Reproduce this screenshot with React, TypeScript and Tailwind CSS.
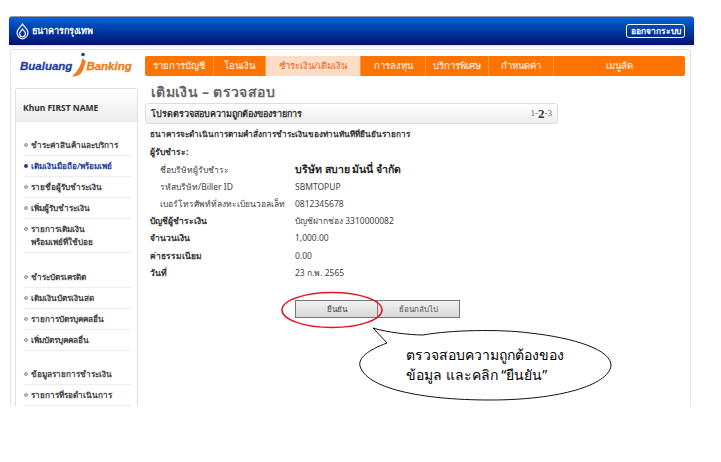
const font = { thai: "font-['Noto_Sans','Noto_Sans_CJK_SC','DejaVu_Sans',sans-serif]" };

const tabs = [
  { label: "รายการบัญชี", w: "w-[69px]" },
  { label: "โอนเงิน", w: "w-[52px]" },
  { label: "ชำระเงิน/เติมเงิน", w: "w-[95px]", active: true },
  { label: "การลงทุน", w: "w-[65px]" },
  { label: "บริการพิเศษ", w: "w-[63px]" },
  { label: "กำหนดค่า", w: "w-[65px]" },
  { label: "เมนูลัด", w: "flex-1" },
];

const menuGroups = [
  {
    gap: "mb-[14px]",
    items: [
      { label: "ชำระค่าสินค้าและบริการ" },
      { label: "เติมเงินมือถือ/พร้อมเพย์", active: true },
      { label: "รายชื่อผู้รับชำระเงิน" },
      { label: "เพิ่มผู้รับชำระเงิน" },
      { label: "รายการเติมเงิน", second: "พร้อมเพย์ที่ใช้บ่อย" },
    ],
  },
  {
    gap: "mb-[13px]",
    items: [
      { label: "ชำระบัตรเครดิต" },
      { label: "เติมเงินบัตรเงินสด" },
      { label: "รายการบัตรบุคคลอื่น" },
      { label: "เพิ่มบัตรบุคคลอื่น" },
    ],
  },
  {
    gap: "",
    items: [{ label: "ข้อมูลรายการชำระเงิน" }, { label: "รายการที่รอดำเนินการ" }],
  },
];

const rows = [
  { label: "ชื่อบริษัทผู้รับชำระ", value: "บริษัท สบาย มันนี่ จำกัด", sub: true, strong: true },
  { label: "รหัสบริษัท/Biller ID", value: "SBMTOPUP", sub: true },
  { label: "เบอร์โทรศัพท์ที่ลงทะเบียนวอลเล็ท", value: "0812345678", sub: true },
  { label: "บัญชีผู้ชำระเงิน", value: "บัญชีฝากช่อง 3310000082" },
  { label: "จำนวนเงิน", value: "1,000.00" },
  { label: "ค่าธรรมเนียม", value: "0.00" },
  { label: "วันที่", value: "23 ก.พ. 2565" },
];

function Logo() {
  return (
    <div className="w-[116px] h-[26px] -mt-[4px] flex items-center italic font-black text-[#1f3f9c] text-[11.5px] font-['Liberation_Sans',sans-serif] shrink-0">
      <span className="mt-[3px] [-webkit-text-stroke:0.3px_#1f3f9c]">Bualuang</span>
      <svg width="16" height="26" viewBox="0 0 16 26" className="shrink-0 -ml-[1px]">
        <circle cx="12" cy="2.5" r="1.8" fill="#1f3f9c" />
        <path d="M11 6 Q11 15 1 24.5 Q9 25 12 18 Q14 12 15 9 Q13 8 11 6 Z" fill="#f47a1f" />
      </svg>
      <span className="mt-[3px] text-[#ef7b16] [-webkit-text-stroke:0.3px_#ef7b16] -ml-[1px]">Banking</span>
    </div>
  );
}

export default function App() {
  return (
    <div className={`w-[721px] h-[462px] bg-white overflow-hidden relative ${font.thai}`}>
      <div className="pt-4 pl-[9px] w-[694px]">
        <header className="h-[29px] rounded-t-[3px] bg-gradient-to-b from-[#0a62d8] to-[#00106f] border-t border-[#999] flex items-center justify-between pl-[7px] pr-[9px] shadow-sm">
          <div className="flex items-center gap-[3px] text-white text-[9px] font-bold">
            <svg width="13" height="17" viewBox="0 0 13 17" fill="none" stroke="#fff" strokeWidth="1.2">
              <path d="M6.5 1 C8 4 12 6 12 9.5 C12 13 9 15.5 6.5 16 C4 15.5 1 13 1 9.5 C1 6 5 4 6.5 1 Z" />
              <path d="M6.5 6 C7.5 8 9.5 9 9.5 10.5 C9.5 12 8 13.5 6.5 14 C5 13.5 3.5 12 3.5 10.5 C3.5 9 5.5 8 6.5 6 Z" />
            </svg>
            <span>ธนาคารกรุงเทพ</span>
          </div>
          <div className="h-[14px] w-[59px] border border-white rounded-[3px] text-white text-[8.5px] font-bold flex items-center justify-center leading-none">
            ออกจากระบบ
          </div>
        </header>

        <div className="mt-[4px] ml-[1px] w-[681px] border-l border-t border-r border-[#e4e4e4] rounded-t-[3px] pl-[4px] pr-[5px] pt-[1px] flex flex-col">
          <div className="flex items-start gap-[9px] pt-[5px] pl-[5px]">
            <Logo />
            <nav className="flex-1 h-[20px] bg-[#ff7300] rounded-[2px] flex text-[9.5px] text-white">
              {tabs.map((t) => (
                <div
                  key={t.label}
                  className={`${t.w} h-full flex items-center justify-center border-r border-[#ff9a4d] last:border-r-0 ${t.active ? "bg-[#ffdcc6] text-[#e8631a]" : ""}`}
                >
                  {t.label}
                </div>
              ))}
            </nav>
          </div>

          <div className="flex gap-[8px] mt-[10px]">
            <aside className="w-[123px] shrink-0 border-l border-r border-t border-[#e0e0e0] rounded-t-[3px]">
              <div className="h-[33px] pt-[5px] bg-gradient-to-b from-white to-[#ececec] flex items-center pl-[7px] text-[8.5px] font-bold text-[#333]">
                Khun FIRST NAME
              </div>
              <div className="pt-[12.5px] pl-[8px] pr-[6px]">
                {menuGroups.map((g, i) => (
                  <ul key={i} className={g.gap}>
                    {g.items.map((m) => (
                      <li
                        key={m.label}
                        className={`border-b border-[#eee] text-[8.2px] font-semibold leading-[13px] py-[3.5px] ${m.second ? "" : "h-[21px]"} ${m.active ? "text-[#1d3f97]" : "text-[#444]"}`}
                      >
                        <div className="flex items-center gap-[3px]">
                          <span
                            className={`w-[4px] h-[4px] rounded-full shrink-0 ${m.active ? "bg-[#1d3f97]" : "bg-[#ccc] border border-[#999]"}`}
                          />
                          <span className="whitespace-nowrap">{m.label}</span>
                        </div>
                        {m.second && <div className="pl-[7px] whitespace-nowrap">{m.second}</div>}
                      </li>
                    ))}
                  </ul>
                ))}
              </div>
            </aside>

            <main className="flex-1 min-w-0">
              <h1 className="text-[14px] font-bold text-[#666] leading-[16px] -mt-[4px] pl-[5px] tracking-wide">
                เติมเงิน – ตรวจสอบ
              </h1>
              <div className="w-[413px] h-[21px] mt-[3px] -ml-[1px] border border-[#ddd] rounded-[3px] bg-gradient-to-b from-white to-[#eeeeee] flex items-center justify-between px-[5px] text-[9px] font-bold text-[#333]">
                <span>โปรดตรวจสอบความถูกต้องของรายการ</span>
                <span className="font-['Liberation_Serif',serif] font-normal text-[#666] flex items-center">
                  1-<b className="text-[13px] text-[#333]">2</b>-3
                </span>
              </div>
              <p className="mt-[3px] pl-[4px] text-[8.2px] font-bold text-[#333] leading-[14px]">
                ธนาคารจะดำเนินการตามคำสั่งการชำระเงินของท่านทันทีที่ยืนยันรายการ
              </p>
              <p className="mt-[2px] pl-[4px] text-[8.5px] font-bold text-[#333] leading-[17px]">ผู้รับชำระ:</p>
              <dl className="mt-[1.5px] pl-[4px] text-[8.5px] text-[#444]">
                {rows.map((r) => (
                  <div key={r.label} className="flex h-[17.2px] items-center">
                    <dt className={`w-[145px] shrink-0 ${r.sub ? "pl-[10px] font-normal" : "font-bold text-[#333]"}`}>
                      {r.label}
                    </dt>
                    <dd className={r.strong ? "text-[10.5px] font-bold text-[#222]" : ""}>{r.value}</dd>
                  </div>
                ))}
              </dl>
              <div className="flex justify-start pl-[149px] mt-[18px]">
                <button className="w-[83px] h-[18px] border border-[#777] bg-gradient-to-b from-[#f2f2f2] to-[#d8d8d8] text-[8px] text-[#444]">
                  ยืนยัน
                </button>
                <button className="w-[82px] h-[18px] border border-[#777] border-l-0 bg-gradient-to-b from-[#f2f2f2] to-[#d8d8d8] text-[8px] text-[#555]">
                  ย้อนกลับไป
                </button>
              </div>
            </main>
          </div>
        </div>
      </div>

      {/* annotation overlay */}
      <svg width="721" height="462" className="absolute inset-0 pointer-events-none">
        <ellipse cx="332" cy="310" rx="50" ry="17.5" fill="none" stroke="#e8151c" strokeWidth="1.5" />
        <path
          d="M373 328 C385 332 410 335 423 335 C450 330 500 329 530 333 C575 338 612 350 611 366 C608 385 560 400 490 400 C420 400 366 388 360 366 C358 358 368 350 387 343 Z"
          fill="#fff"
          stroke="#111"
          strokeWidth="1"
        />
      </svg>
      <div className="absolute left-[406px] top-[345px] text-[14px] leading-[19.5px] text-black whitespace-nowrap">
        ตรวจสอบความถูกต้องของ
        <br />
        ข้อมูล และคลิก “ยืนยัน”
      </div>
    </div>
  );
}
